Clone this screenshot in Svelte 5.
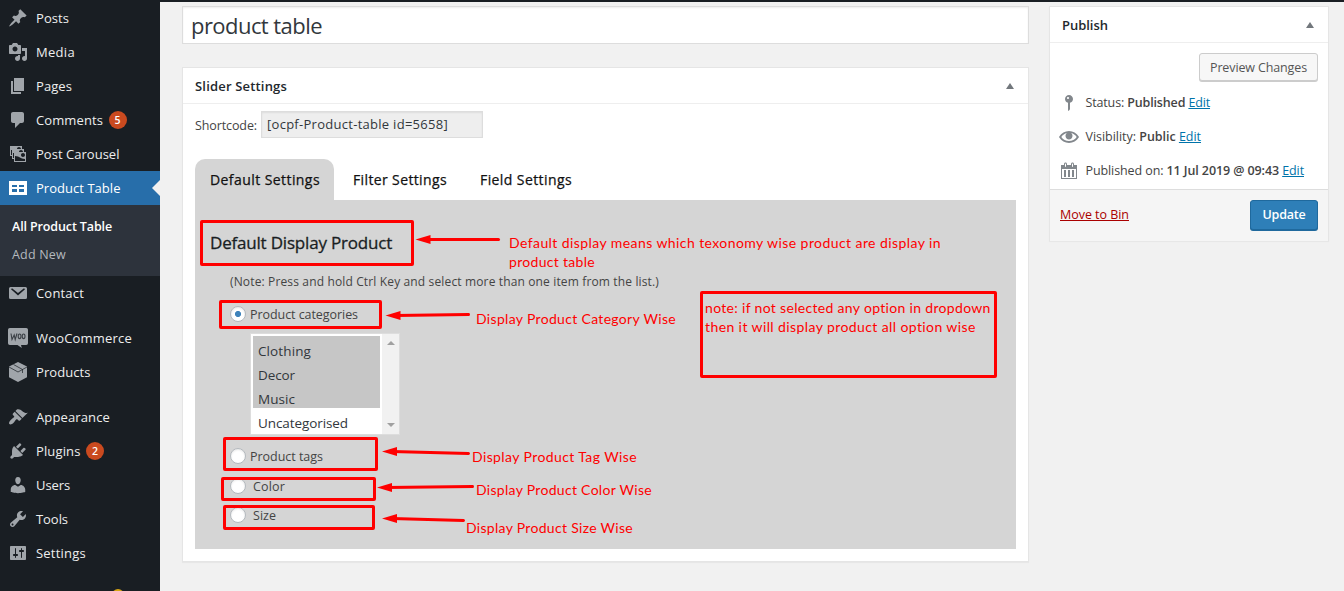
<script>
  // Tracks a label so that it fills the given width in pixels.
  function fit(node, width) {
    node.style.letterSpacing = '0px';
    const natural = node.getBoundingClientRect().width;
    const count = node.textContent.length;
    node.style.letterSpacing = `${(width - natural) / count}px`;
  }

  const icons = {
    post: 'M10.44 3.02l1.82-1.82 6.36 6.35-1.83 1.82c-1.05-.68-2.48-.57-3.41.36l-.75.75c-.92.93-1.04 2.35-.35 3.41l-1.83 1.82-2.41-2.41-2.8 2.79c-.42.42-3.38 2.71-3.8 2.29s1.86-3.39 2.28-3.81l2.79-2.79L4.1 9.36l1.83-1.82c1.05.69 2.48.57 3.4-.36l.75-.75c.93-.92 1.05-2.35.36-3.41z',
    media: 'M13 11V4c0-.55-.45-1-1-1h-1.67L9 1H5L3.67 3H2c-.55 0-1 .45-1 1v7c0 .55.45 1 1 1h10c.55 0 1-.45 1-1zM7 4.5c1.38 0 2.5 1.12 2.5 2.5S8.38 9.5 7 9.5 4.5 8.38 4.5 7 5.62 4.5 7 4.5zM14 6h5v10.5c0 1.38-1.12 2.5-2.5 2.5S14 17.88 14 16.5s1.12-2.5 2.5-2.5c.17 0 .34.02.5.05V9h-3V6zm-4 8.05V13h2v3.5c0 1.38-1.12 2.5-2.5 2.5S7 17.88 7 16.5 8.12 14 9.5 14c.17 0 .34.02.5.05z',
    page: 'M6 15V2h10v13H6zm-1 1h8v2H3V5h2v11z',
    comments: 'M5 2h9c1.1 0 2 .9 2 2v7c0 1.1-.9 2-2 2h-2l-5 5v-5H5c-1.1 0-2-.9-2-2V4c0-1.1.9-2 2-2z',
    images: 'M4 15v-3H2V2h12v3h2v3h2v10H6v-3H4zm7-12c-1.1 0-2 .9-2 2h4c0-1.1-.89-2-2-2zm-7 8V6H3v5h1zm7-3h4c0-1.1-.89-2-2-2-1.1 0-2 .9-2 2zm-5 6V9H5v5h1zm9-1c1.1 0 2-.89 2-2 0-1.1-.9-2-2-2s-2 .9-2 2c0 1.11.9 2 2 2zm2 4v-2c-5 0-5-3-10-3v5h10z',
    table: 'M1 17V3h18v14H1zM9 7H4v2h5V7zm7 0h-5v2h5V7zm-7 4H4v3h5v-3zm7 0h-5v3h5v-3z',
    email: 'M3 4h14.500a1.500 1.500 0 0 1 1.500 1.500v9a1.500 1.500 0 0 1-1.500 1.500H2.500A1.500 1.500 0 0 1 1 14.500v-9A1.500 1.500 0 0 1 2.500 4zM4 5.200L3 6.300l7 6.200 7-6.200-1-1.100-6 4.900z',
    woo: 'M1.800 0h16.400A1.800 1.800 0 0 1 20 1.800v13.400a1.800 1.800 0 0 1-1.800 1.800H13l.8 3-4.300-3H1.800A1.800 1.800 0 0 1 0 15.200V1.800A1.800 1.800 0 0 1 1.800 0z',
    box: 'M10 0l9 4.600v10.600L10 20l-9-4.800V4.600z',
    brush: 'M14.48 11.06L7.41 3.99l1.5-1.5c.5-.56 2.3-.47 3.51.32 1.21.8 1.43 1.28 2.91 2.1 1.18.64 2.45 1.26 4.45.85zm-.71.71L6.7 4.7 4.93 6.47c-.39.39-.39 1.02 0 1.41l1.06 1.06c.39.39.39 1.03 0 1.42-.6.6-1.43 1.11-2.21 1.69-.35.26-.7.53-1.01.84C1.43 14.23.4 16.08 1.4 17.07c.99 1 2.84-.03 4.18-1.36.31-.31.58-.66.85-1.02.57-.78 1.08-1.61 1.69-2.21.39-.39 1.02-.39 1.41 0l1.06 1.06c.39.39 1.02.39 1.41 0z',
    plug: 'M13.11 4.36L9.87 7.6 8 5.73l3.24-3.24c.35-.34 1.05-.2 1.56.32.52.51.66 1.21.31 1.55zm-8 1.77l.91-1.12 9.01 9.01-1.19.84c-.71.71-2.63 1.16-3.82 1.16H6.14L4.9 17.26c-.59.59-1.54.59-2.12 0-.59-.58-.59-1.53 0-2.12l1.24-1.24v-3.88c0-1.13.4-3.19 1.09-3.89zm7.26 3.97l3.24-3.24c.34-.35 1.04-.21 1.55.31.52.51.66 1.21.31 1.55l-3.24 3.25z',
    users: 'M10 9.25c-2.27 0-2.73-3.44-2.73-3.44C7 4.02 7.82 2 9.97 2c2.16 0 2.98 2.02 2.71 3.81 0 0-.41 3.44-2.68 3.44zm0 2.57L12.72 10c2.39 0 4.52 2.33 4.52 4.53v2.49s-3.65 1.13-7.24 1.13c-3.65 0-7.24-1.13-7.24-1.13v-2.49c0-2.25 1.94-4.48 4.47-4.48z',
    tools: 'M16.68 9.77c-1.34 1.34-3.3 1.67-4.95.99l-5.41 6.52c-.99.99-2.59.99-3.58 0s-.99-2.59 0-3.57l6.52-5.42c-.68-1.65-.35-3.61.99-4.95 1.28-1.28 3.12-1.62 4.72-1.06l-2.89 2.89 2.82 2.82 2.86-2.87c.53 1.58.18 3.39-1.08 4.65zM3.81 16.21c.4.39 1.04.39 1.43 0 .4-.4.4-1.04 0-1.43-.39-.4-1.03-.4-1.43 0-.39.39-.39 1.03 0 1.43z',
    sliders: 'M18 16V4c0-.55-.45-1-1-1H3c-.55 0-1 .45-1 1v12c0 .55.45 1 1 1h14c.55 0 1-.45 1-1zM8 11h1c.55 0 1 .45 1 1s-.45 1-1 1H8v1.500c0 .28-.22.5-.5.5s-.5-.22-.5-.5V13H6c-.55 0-1-.45-1-1s.45-1 1-1h1V5.500c0-.28.22-.5.5-.5s.5.22.5.5V11zm5-2h-1c-.55 0-1-.45-1-1s.45-1 1-1h1V5.500c0-.28.22-.5.5-.5s.5.22.5.5V7h1c.55 0 1 .45 1 1s-.45 1-1 1h-1v5.500c0 .28-.22.5-.5.5s-.5-.22-.5-.5V9z',
    pin: 'M14 6c0 1.860-1.280 3.410-3 3.860V16c0 1-2 2-2 2V9.860c-1.720-.45-3-2-3-3.860 0-2.210 1.790-4 4-4s4 1.790 4 4zM8 5c0 .55.45 1 1 1s1-.45 1-1-.45-1-1-1-1 .45-1 1z',
    eye: 'M19.700 9.400C17.700 6 14 3.900 10 3.900S2.300 6 .3 9.400L0 10l.3.600c2 3.400 5.700 5.500 9.700 5.500s7.700-2.100 9.700-5.500l.3-.6-.3-.6zM10 14.100c-3.100 0-6-1.600-7.700-4.100C3.600 8 5.700 6.600 8 6.100c-.9.600-1.500 1.700-1.500 2.900 0 1.900 1.600 3.500 3.500 3.500s3.500-1.600 3.500-3.500c0-1.200-.6-2.300-1.500-2.900 2.300.5 4.400 1.900 5.700 3.900-1.700 2.500-4.600 4.100-7.700 4.100z',
    calendar: 'M15 4h3v14H2V4h3V3c0-.83.67-1.500 1.500-1.500S8 2.170 8 3v1h4V3c0-.83.67-1.500 1.500-1.500S15 2.170 15 3v1zM6 3v2.500c0 .28.22.5.5.5s.5-.22.5-.5V3c0-.28-.22-.5-.5-.5S6 2.720 6 3zm7 0v2.500c0 .28.22.5.5.5s.5-.22.5-.5V3c0-.28-.22-.5-.5-.5s-.5.22-.5.5zm4 14V8H3v9h14zM7 16V9H5v7h2zm4 0V9H9v7h2zm4 0V9h-2v7h2z'
  };

  const menu = [
    { label: 'Posts', w: 33, icon: 'post' },
    { label: 'Media', w: 39, icon: 'media' },
    { label: 'Pages', w: 36, icon: 'page' },
    { label: 'Comments', w: 67, icon: 'comments', badge: 5 },
    { label: 'Post Carousel', w: 83.5, icon: 'images' },
    { label: 'Product Table', w: 84.5, icon: 'table', active: true },
    { label: 'Contact', w: 48, icon: 'email' },
    { label: 'WooCommerce', w: 96, icon: 'woo', gap: true },
    { label: 'Products', w: 54.5, icon: 'box' },
    { label: 'Appearance', w: 74, icon: 'brush', gap: true },
    { label: 'Plugins', w: 44.5, icon: 'plug', badge: 2 },
    { label: 'Users', w: 34, icon: 'users' },
    { label: 'Tools', w: 32, icon: 'tools' },
    { label: 'Settings', w: 50, icon: 'sliders' }
  ];

  const categories = [
    { label: 'Clothing', w: 53, selected: true },
    { label: 'Decor', w: 37, selected: true },
    { label: 'Music', w: 37, selected: true },
    { label: 'Uncategorised', w: 90, selected: false }
  ];

  const frames = [
    [201.500, 221.500, 211, 43],
    [220.500, 301.500, 160, 26],
    [224.500, 438.500, 152, 31],
    [222.500, 478.500, 152, 21],
    [224.500, 506.500, 149, 22],
    [701.500, 292.500, 294, 84]
  ];

  const arrows = [
    { x: 415.500, y: 239.500, x2: 498.500, y2: 239.500 },
    { x: 385.500, y: 315.500, x2: 468.500, y2: 314.500 },
    { x: 382, y: 451.500, x2: 468.500, y2: 453.500 },
    { x: 377, y: 487.500, x2: 472.500, y2: 486.500 },
    { x: 382, y: 518.500, x2: 463.500, y2: 520.500 }
  ];

  const notes = [
    { x: 509, y: 233, w: 432, text: 'Default display means which texonomy wise product are display in' },
    { x: 509, y: 252, w: 86, text: 'product table' },
    { x: 476, y: 309, w: 200, text: 'Display Product Category Wise' },
    { x: 472, y: 447, w: 165, text: 'Display Product Tag Wise' },
    { x: 476, y: 480, w: 176, text: 'Display Product Color Wise' },
    { x: 466, y: 518, w: 167, text: 'Display Product Size Wise' },
    { x: 705, y: 298, w: 286, text: 'note: if not selected any option in dropdown' },
    { x: 705, y: 317, w: 271, text: 'then it will display product all option wise' }
  ];
</script>

{#snippet icon(name)}
  <svg class="icon" viewBox="0 0 20 20" fill="currentColor" fill-rule="evenodd">
    <path d={icons[name]} />
    {#if name === 'woo'}
      <g fill="none" stroke="#3b4046" stroke-width="1.1">
        <path d="M3 5.500l1 6 2.200-4.500 1 4.500L9 5.500" />
        <ellipse cx="11.600" cy="8.300" rx="1.400" ry="2.300" />
        <ellipse cx="15.600" cy="8.300" rx="1.400" ry="2.300" />
      </g>
    {:else if name === 'box'}
      <path d="M1 5l9 5 9-5M5.500 2.500l9 5v3.500" fill="none" stroke="#191e23" stroke-width=".7" />
    {/if}
  </svg>
{/snippet}

<div class="screen">
  <div class="adminbar"></div>

  <nav class="sidebar">
    {#each menu as item}
      <div class="item" class:active={item.active} class:gap={item.gap}>
        {@render icon(item.icon)}
        <span class="label" use:fit={item.w}>{item.label}</span>
        {#if item.badge}<span class="badge">{item.badge}</span>{/if}
      </div>
      {#if item.active}
        <div class="submenu">
          <div class="sub current"><span use:fit={100}>All Product Table</span></div>
          <div class="sub"><span use:fit={54}>Add New</span></div>
        </div>
      {/if}
    {/each}
    <div class="more"></div>
  </nav>

  <main>
    <div class="title"><span use:fit={131}>product table</span></div>
    <section class="card settings">
      <header><h2 use:fit={92}>Slider Settings</h2><i class="up"></i></header>
      <div class="shortcode">
        <span use:fit={62}>Shortcode:</span>
        <div class="code"><span use:fit={181}>[ocpf-Product-table id=5658]</span></div>
      </div>
      <div class="tabs">
        <div class="tab on"><span use:fit={110}>Default Settings</span></div>
        <div class="tab"><span use:fit={94}>Filter Settings</span></div>
        <div class="tab"><span use:fit={92}>Field Settings</span></div>
      </div>
      <div class="panel">
        <h3><span use:fit={182}>Default Display Product</span></h3>
        <p class="hint"><span use:fit={429}>(Note: Press and hold Ctrl Key and select more than one item from the list.)</span></p>
        <div class="option first"><i class="radio checked"></i><span use:fit={108}>Product categories</span></div>
        <div class="select">
          <div class="list">
            {#each categories as c}
              <div class="choice" class:selected={c.selected}><span use:fit={c.w}>{c.label}</span></div>
            {/each}
          </div>
          <div class="scroll"><i class="up"></i><i class="down"></i></div>
        </div>
        <div class="option tags"><i class="radio"></i><span use:fit={73}>Product tags</span></div>
        <div class="option wide color"><i class="radio"></i><span use:fit={32}>Color</span></div>
        <div class="option wide"><i class="radio"></i><span use:fit={23}>Size</span></div>
      </div>
    </section>
  </main>

  <aside class="card">
    <header><h2 use:fit={46}>Publish</h2><i class="up"></i></header>
    <div class="preview"><button><span use:fit={97}>Preview Changes</span></button></div>
    <div class="meta">{@render icon('pin')}<span use:fit={124.5}>Status: <b>Published</b> <a href="#status">Edit</a></span></div>
    <div class="meta">{@render icon('eye')}<span use:fit={115.5}>Visibility: <b>Public</b> <a href="#visibility">Edit</a></span></div>
    <div class="meta">{@render icon('calendar')}<span use:fit={218.5}>Published on: <b>11 Jul 2019 @ 09:43</b> <a href="#date">Edit</a></span></div>
    <footer>
      <a class="bin" href="#bin" use:fit={69}>Move to Bin</a>
      <button class="primary"><span use:fit={43}>Update</span></button>
    </footer>
  </aside>

  <svg class="marks" viewBox="0 0 1344 591">
    {#each frames as [x, y, width, height]}
      <rect {x} {y} {width} {height} rx="0.500" />
    {/each}
    {#each arrows as a}
      <line x1={a.x + 10} y1={a.y} x2={a.x2} y2={a.y2} />
      <path d="M{a.x} {a.y}l15-4.500v9z" />
    {/each}
  </svg>
  {#each notes as n}
    <span class="note" style="left: {n.x}px; top: {n.y}px" use:fit={n.w}>{n.text}</span>
  {/each}
</div>

<style>
  :global(body) { margin: 0; background: #f1f1f1; }
  .screen {
    position: relative;
    box-sizing: border-box;
    width: 1344px;
    height: 591px;
    overflow: hidden;
    display: flex;
    align-items: flex-start;
    background: #f1f1f1;
    color: #444;
    font: 12.5px/20px 'Open Sans', 'Noto Sans', sans-serif;
    white-space: nowrap;
  }
  .screen * { box-sizing: border-box; }
  .adminbar { position: absolute; inset: 0 0 auto 0; height: 2px; background: #191e23; }
  .icon { width: 20px; height: 20px; flex: none; display: block; }

  .sidebar {
    width: 160px;
    height: 591px;
    flex: none;
    padding-top: 1px;
    background: #191e23;
    overflow: hidden;
    position: relative;
  }
  .item {
    position: relative;
    display: flex;
    align-items: center;
    height: 34px;
    padding-left: 8px;
    color: #a0a5aa;
    font-size: 13px;
  }
  .item.gap { margin-top: 11px; }
  .label { margin-left: 8px; color: #eee; }
  .active { background: #276eaa; color: #fff; }
  .active .label { color: #fff; }
  .active::after {
    content: '';
    position: absolute;
    right: 0;
    top: 9px;
    border: 8px solid transparent;
    border-left: 0;
    border-right-color: #f1f1f1;
  }
  .badge {
    width: 18px;
    height: 18px;
    margin-left: 5.5px;
    border-radius: 50%;
    background: #ca4a1f;
    color: #fff;
    font-size: 10.5px;
    font-weight: 600;
    line-height: 18px;
    text-align: center;
  }
  .submenu { height: 71px; padding: 8px 0 0 12px; background: #2d333c; }
  .sub { height: 28px; line-height: 28px; color: #b4b9be; }
  .current { color: #fff; font-weight: 600; }
  .more { position: absolute; left: 112px; top: 589px; width: 12px; height: 12px; border-radius: 50%; background: #d9a514; }

  main { width: 847px; flex: none; margin: 6px 0 0 22px; }
  .title {
    height: 38px;
    padding-left: 8px;
    border: 1px solid #ddd;
    background: #fff;
    box-shadow: inset 0 1px 2px rgba(0, 0, 0, 0.07);
    color: #32373c;
    font-size: 22px;
    line-height: 36px;
  }
  .card { border: 1px solid #e5e5e5; background: #fff; box-shadow: 0 1px 1px rgba(0, 0, 0, 0.04); }
  .settings { height: 495px; margin-top: 23px; }
  header {
    height: 36px;
    display: flex;
    align-items: center;
    justify-content: space-between;
    padding: 0 14px 0 12px;
    border-bottom: 1px solid #eee;
  }
  h2 { margin: 0; color: #23282d; font-size: 13px; font-weight: 600; }
  .up, .down { width: 0; height: 0; border: 4px solid transparent; }
  .up { border-top: 0; border-bottom: 6px solid #72777c; }
  .down { border-bottom: 0; border-top: 4px solid #a0a0a0; }
  .shortcode { display: flex; align-items: center; height: 28px; margin: 7px 0 0 12px; }
  .shortcode > span { padding-top: 1px; }
  .code {
    width: 222px;
    height: 27px;
    margin: -1px 0 0 4px;
    padding-left: 5px;
    border: 1px solid #ddd;
    background: #eee;
    box-shadow: inset 0 1px 2px rgba(0, 0, 0, 0.07);
    color: #32373c;
    font-size: 13px;
    line-height: 25px;
  }
  .tabs { display: flex; height: 41px; margin: 20px 12px 0; }
  .tab {
    padding: 0 15px;
    margin-right: 3px;
    color: #111;
    font-size: 14px;
    line-height: 41px;
    -webkit-text-stroke: 0.25px #111;
  }
  .on { width: 139px; margin-right: 4px; border-radius: 10px 10px 0 0; background: #d5d5d5; }
  .panel { height: 349px; margin: 0 12px; padding: 30px 15px 0; background: #d5d5d5; }
  h3 {
    height: 26px;
    margin: 0;
    color: #191e23;
    font-size: 17px;
    font-weight: 400;
    line-height: 26px;
    -webkit-text-stroke: 0.3px #191e23;
  }
  .hint { height: 20px; margin: 16px 0 0 20px; font-size: 12px; }
  .option { display: flex; align-items: center; height: 20px; margin-left: 20px; }
  .option span { padding-top: 2px; }
  .first { margin-top: 12px; }
  .radio {
    width: 16px;
    height: 16px;
    margin-right: 4px;
    border: 1px solid #b4b9be;
    border-radius: 50%;
    background: #fff;
    box-shadow: inset 0 1px 2px rgba(0, 0, 0, 0.1);
  }
  .checked { background: radial-gradient(circle, #3f83bb 0 2.700px, #fff 3.400px); }
  .select { display: flex; width: 150px; height: 102px; margin: 9px 0 0 40px; border: 1px solid #ddd; background: #fff; }
  .list { width: 129px; padding: 2px 0 0 2px; }
  .choice { height: 24px; padding-left: 5px; color: #32373c; font-size: 13.500px; line-height: 30px; }
  .selected { background: #c6c6c6; }
  .scroll {
    width: 17px;
    margin-left: auto;
    padding: 7px 0;
    display: flex;
    flex-direction: column;
    align-items: center;
    justify-content: space-between;
    background: #f1f1f1;
  }
  .scroll .up { border-bottom: 4px solid #a0a0a0; }
  .tags { margin-top: 11px; }
  .wide .radio { margin-right: 7px; }
  .color { margin: 10px 0 9px 20px; }

  aside { width: 280px; height: 235px; flex: none; margin: 6px 0 0 20px; }
  button {
    display: block;
    height: 29px;
    padding: 0;
    border: 1px solid #ccc;
    border-radius: 3px;
    background: #f7f7f7;
    box-shadow: 0 1px 0 #ccc;
    color: #555;
    font: inherit;
  }
  .preview { display: flex; justify-content: flex-end; height: 43px; padding: 10px 10px 0 0; }
  .preview button { width: 119px; height: 28px; line-height: 27px; }
  .meta { display: flex; align-items: center; height: 34px; padding-left: 9px; color: #82878c; }
  .meta span { margin-left: 6.5px; color: #444; }
  b { font-weight: 600; }
  a { color: #0073aa; text-decoration: underline; }
  footer {
    display: flex;
    align-items: center;
    justify-content: space-between;
    height: 52px;
    margin-top: 1px;
    padding: 0 10px 2px;
    border-top: 1px solid #ddd;
    background: #f5f5f5;
  }
  .bin { color: #a00; }
  .primary {
    width: 68px;
    height: 30px;
    border-color: #1f699d;
    background: #2e7fb8;
    box-shadow: 0 1px 0 #1f699d;
    color: #fff;
    font-weight: 600;
  }

  .marks { position: absolute; left: 0; top: 0; width: 1344px; height: 591px; fill: none; stroke: #f00; stroke-width: 3; stroke-linecap: round; }
  .marks path { fill: #f00; stroke: none; }
  .note { position: absolute; color: #f00; font: 14px/19px Lato, sans-serif; }
</style>
